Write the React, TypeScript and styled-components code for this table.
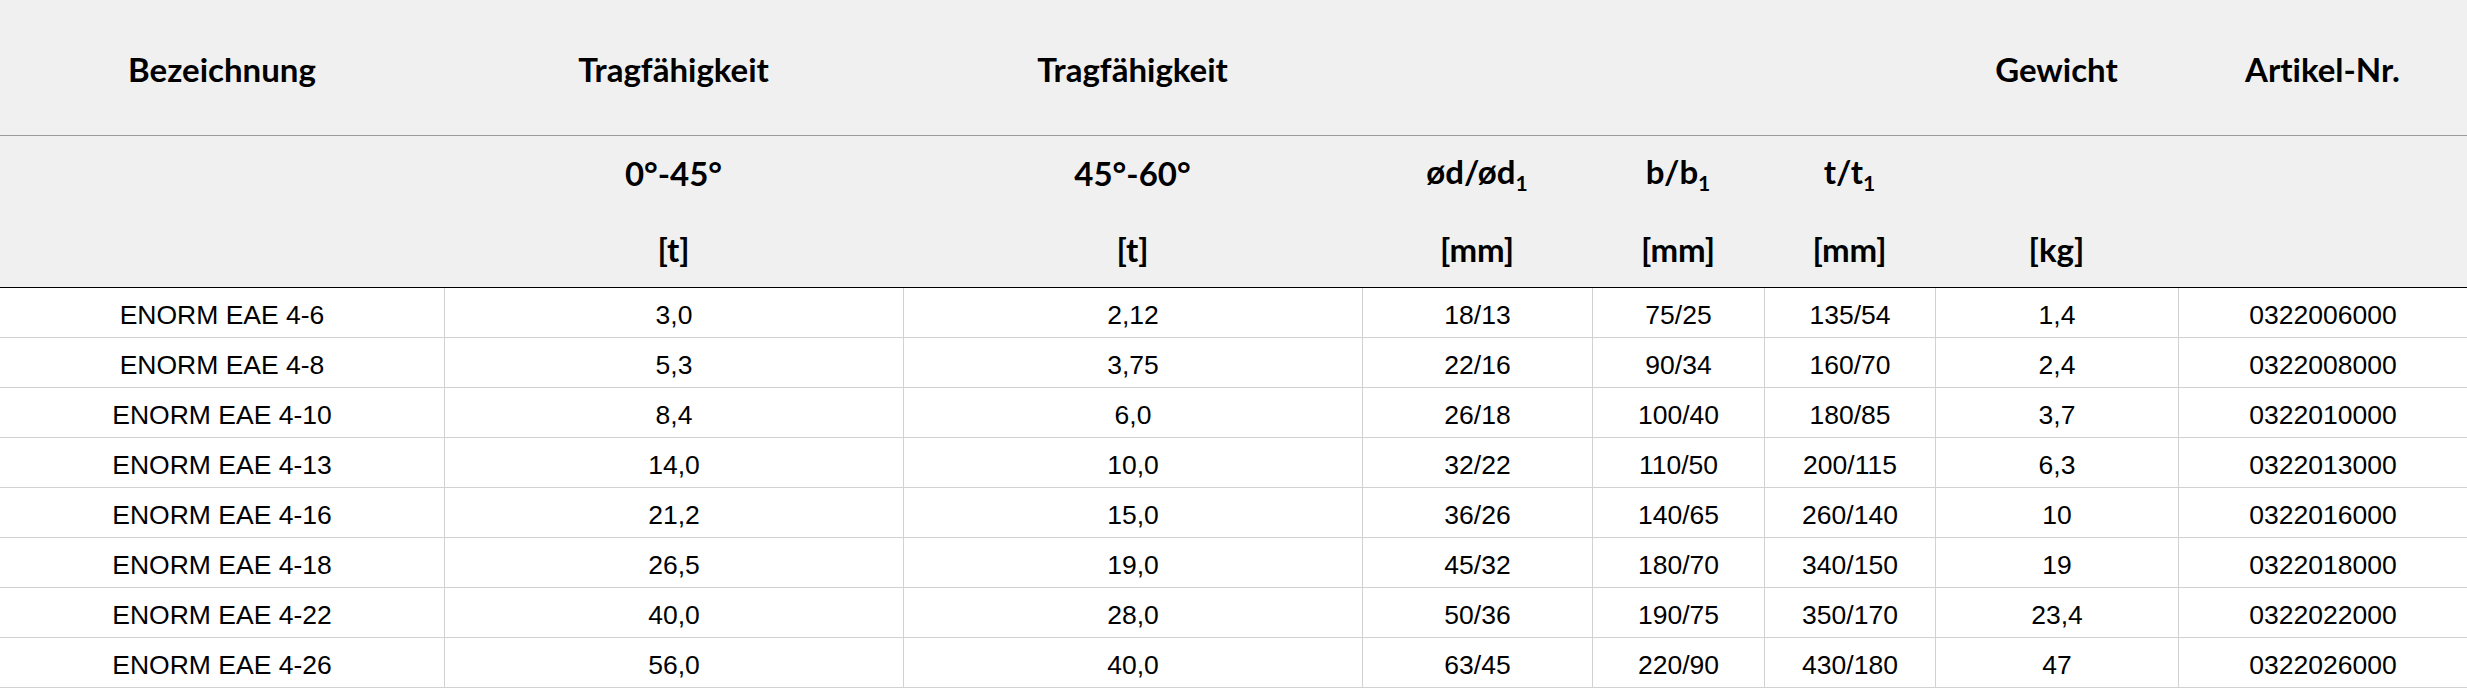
import React from "react";
import styled, { createGlobalStyle } from "styled-components";

const GlobalStyle = createGlobalStyle`
  html, body {
    margin: 0;
    padding: 0;
    background: #ffffff;
  }
`;

const COLS = "444px 459px 459px 230px 172px 171px 243px 289px";

const Table = styled.div`
  width: 2467px;
  display: grid;
  grid-template-columns: ${COLS};
  color: #000;
`;

const HeadCell = styled.div`
  background: #f0f0f0;
  height: 136px;
  border-bottom: 1px solid #9b9b9b;
  display: flex;
  align-items: center;
  justify-content: center;
  font-family: "Lato", "Open Sans", sans-serif;
  font-weight: 700;
  font-size: 33px;
  font-variant-ligatures: none;
  padding-top: 2px;
  box-sizing: border-box;
`;

const SubCell = styled.div<{ bottom?: boolean }>`
  background: #f0f0f0;
  height: ${(p) => (p.bottom ? "78px" : "74px")};
  border-bottom: ${(p) => (p.bottom ? "1px solid #000" : "none")};
  display: flex;
  align-items: center;
  justify-content: center;
  font-family: "Lato", "Open Sans", sans-serif;
  font-weight: 700;
  font-size: 33px;
  font-variant-ligatures: none;
  box-sizing: border-box;
`;

const Sub = styled.span`
  font-size: 21px;
  vertical-align: -7px;
`;

const Cell = styled.div<{ first?: boolean }>`
  height: 50px;
  box-sizing: border-box;
  border-bottom: 1px solid #d2d2d2;
  border-left: ${(p) => (p.first ? "none" : "1px solid #d2d2d2")};
  display: flex;
  align-items: center;
  justify-content: center;
  padding-top: 6px;
  font-family: "Liberation Sans", Arial, sans-serif;
  font-size: 26.5px;
`;

const headers = [
  "Bezeichnung",
  "Tragfähigkeit",
  "Tragfähigkeit",
  "",
  "",
  "",
  "Gewicht",
  "Artikel-Nr.",
];

const sub1: React.ReactNode[] = [
  "",
  "0°-45°",
  "45°-60°",
  <>
    <span>ød/ød</span>
    <Sub>1</Sub>
  </>,
  <>
    <span>b/b</span>
    <Sub>1</Sub>
  </>,
  <>
    <span>t/t</span>
    <Sub>1</Sub>
  </>,
  "",
  "",
];

const sub2 = ["", "[t]", "[t]", "[mm]", "[mm]", "[mm]", "[kg]", ""];

const rows = [
  ["ENORM EAE 4-6", "3,0", "2,12", "18/13", "75/25", "135/54", "1,4", "0322006000"],
  ["ENORM EAE 4-8", "5,3", "3,75", "22/16", "90/34", "160/70", "2,4", "0322008000"],
  ["ENORM EAE 4-10", "8,4", "6,0", "26/18", "100/40", "180/85", "3,7", "0322010000"],
  ["ENORM EAE 4-13", "14,0", "10,0", "32/22", "110/50", "200/115", "6,3", "0322013000"],
  ["ENORM EAE 4-16", "21,2", "15,0", "36/26", "140/65", "260/140", "10", "0322016000"],
  ["ENORM EAE 4-18", "26,5", "19,0", "45/32", "180/70", "340/150", "19", "0322018000"],
  ["ENORM EAE 4-22", "40,0", "28,0", "50/36", "190/75", "350/170", "23,4", "0322022000"],
  ["ENORM EAE 4-26", "56,0", "40,0", "63/45", "220/90", "430/180", "47", "0322026000"],
];

const App: React.FC = () => {
  return (
    <>
      <GlobalStyle />
      <Table>
        {headers.map((h, i) => (
          <HeadCell key={"h" + i}>{h}</HeadCell>
        ))}
        {sub1.map((s, i) => (
          <SubCell key={"s1" + i}>
            <div>{s}</div>
          </SubCell>
        ))}
        {sub2.map((s, i) => (
          <SubCell key={"s2" + i} bottom>
            {s}
          </SubCell>
        ))}
        {rows.map((row, r) =>
          row.map((v, c) => (
            <Cell key={r + "-" + c} first={c === 0}>
              {v}
            </Cell>
          ))
        )}
      </Table>
    </>
  );
};

export default App;
